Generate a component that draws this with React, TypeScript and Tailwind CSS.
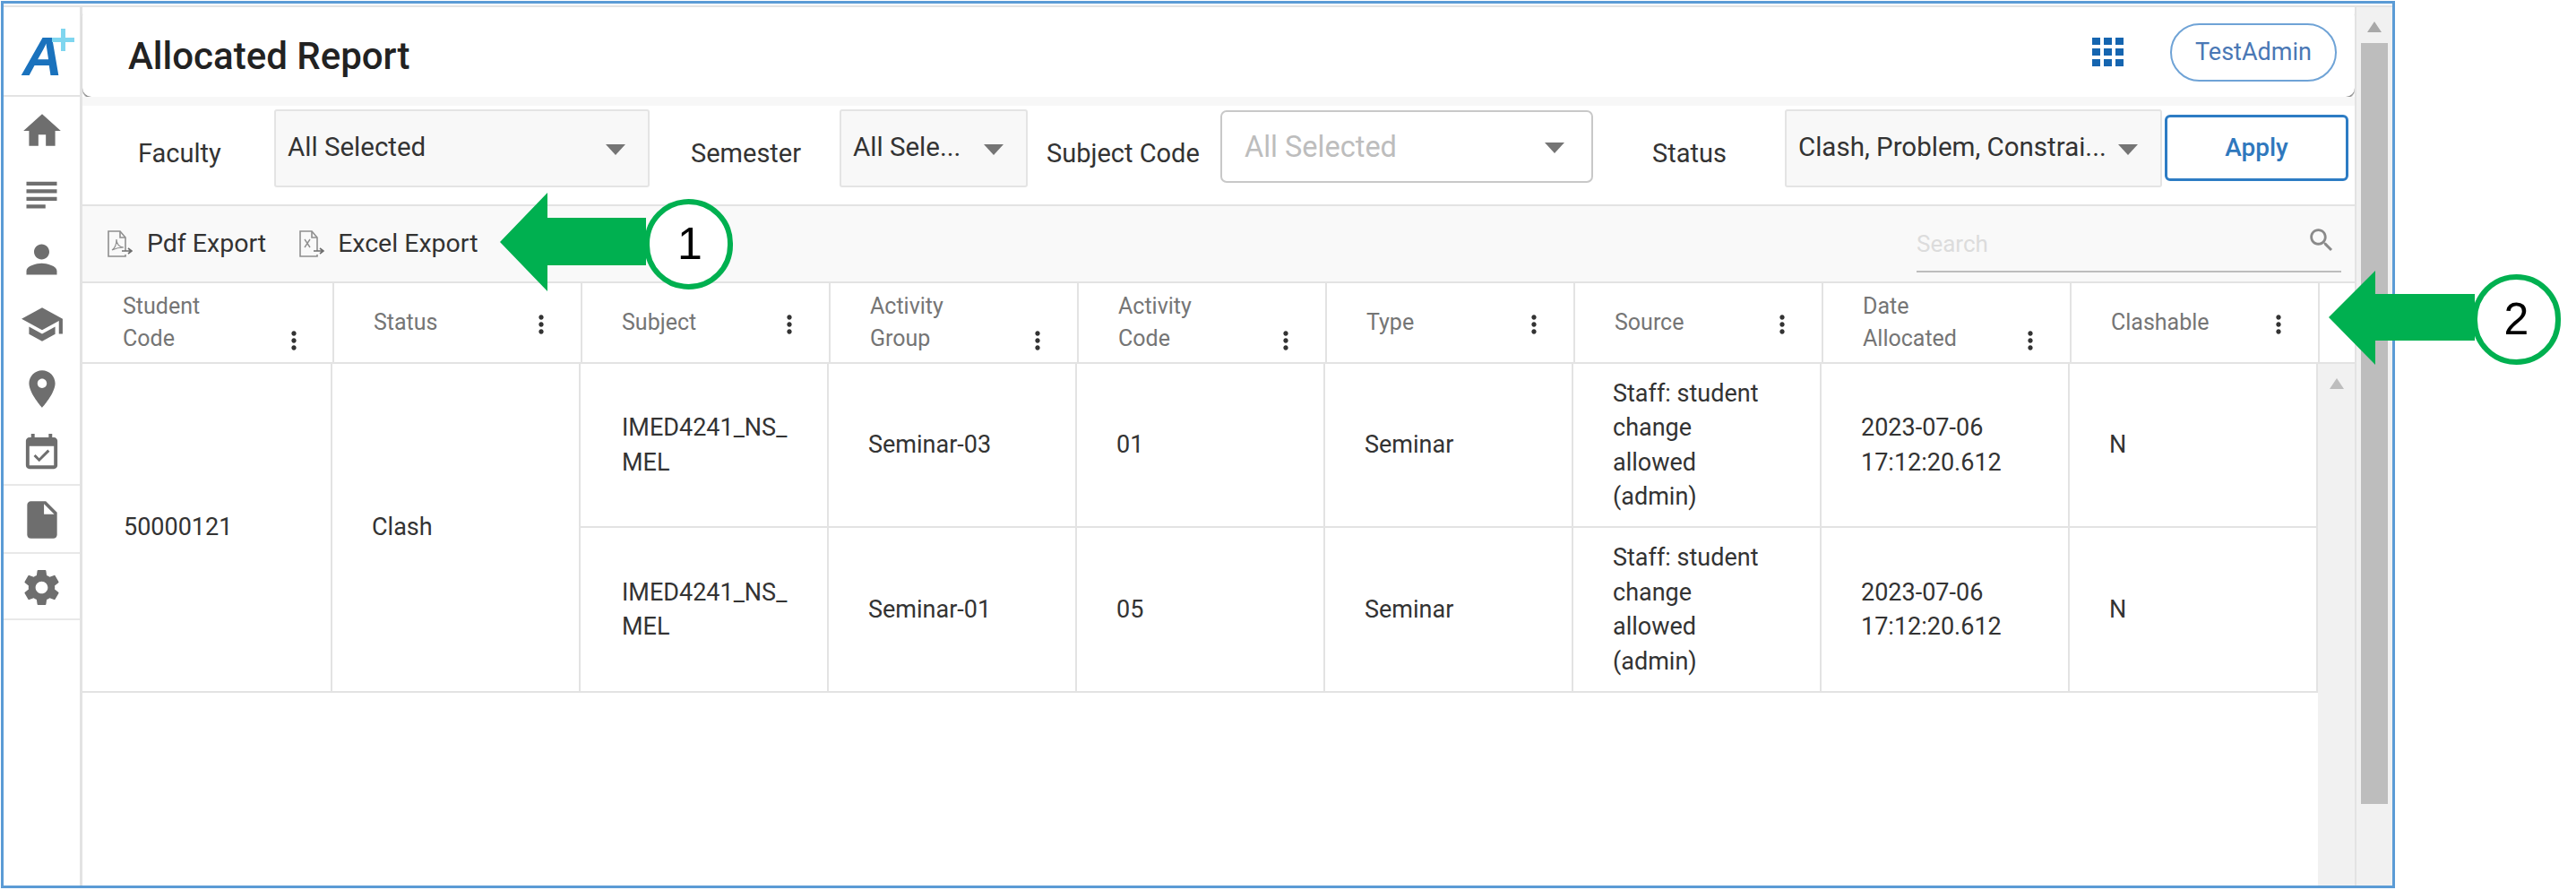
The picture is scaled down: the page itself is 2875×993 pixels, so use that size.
const kebab = "M12 8c1.1 0 2-.9 2-2s-.9-2-2-2-2 .9-2 2 .9 2 2 2zm0 2c-1.1 0-2 .9-2 2s.9 2 2 2 2-.9 2-2-.9-2-2-2zm0 6c-1.1 0-2 .9-2 2s.9 2 2 2 2-.9 2-2-.9-2-2-2z";

const MdIcon = ({ d, size }: { d: string; size: number }) => (
  <svg width={size} height={size} viewBox="0 0 24 24" fill="#6e6e6e">
    <path d={d} />
  </svg>
);

const Caret = ({ className }: { className?: string }) => (
  <svg width="22" height="12" viewBox="0 0 22 12" className={className}>
    <polygon points="0,0 22,0 11,12" fill="#757575" />
  </svg>
);

const navTop = [
  { d: "M10 20v-6h4v6h5v-8h3L12 3 2 12h3v8z", size: 50 },
  { d: "M14 17H4v2h10v-2zm6-8H4v2h16V9zM4 15h16v-2H4v2zM4 5v2h16V5H4z", size: 51 },
  { d: "M12 12c2.21 0 4-1.79 4-4s-1.79-4-4-4-4 1.79-4 4 1.79 4 4 4zm0 2c-2.67 0-8 1.34-8 4v2h16v-2c0-2.66-5.33-4-8-4z", size: 51 },
  { d: "M5 13.18v4L12 21l7-3.82v-4L12 17l-7-3.82zM12 3L1 9l11 6 9-4.91V17h2V9L12 3z", size: 50 },
  { d: "M12 2C8.13 2 5 5.13 5 9c0 5.25 7 13 7 13s7-7.75 7-13c0-3.87-3.13-7-7-7zm0 9.5c-1.38 0-2.5-1.12-2.5-2.5s1.12-2.5 2.5-2.5 2.5 1.12 2.5 2.5-1.12 2.5-2.5 2.5z", size: 50 },
  { d: "M16.53 11.06L15.47 10l-4.88 4.88-2.12-2.12-1.06 1.06L10.59 17l5.94-5.94zM19 3h-1V1h-2v2H8V1H6v2H5c-1.11 0-1.99.9-1.99 2L3 19c0 1.1.89 2 2 2h14c1.1 0 2-.9 2-2V5c0-1.1-.9-2-2-2zm0 16H5V8h14v11z", size: 47 },
];
const fileIcon = "M6 2c-1.1 0-1.99.9-1.99 2L4 20c0 1.1.89 2 1.99 2H18c1.1 0 2-.9 2-2V8l-6-6H6zm7 7V3.5L18.5 9H13z";
const gearIcon = "M19.43 12.98c.04-.32.07-.64.07-.98s-.03-.66-.07-.98l2.11-1.65c.19-.15.24-.42.12-.64l-2-3.46c-.12-.22-.39-.3-.61-.22l-2.49 1c-.52-.4-1.08-.73-1.69-.98l-.38-2.65C14.46 2.18 14.25 2 14 2h-4c-.25 0-.46.18-.49.42l-.38 2.65c-.61.25-1.17.59-1.69.98l-2.49-1c-.23-.09-.49 0-.61.22l-2 3.46c-.13.22-.07.49.12.64l2.11 1.65c-.04.32-.07.65-.07.98s.03.66.07.98l-2.11 1.65c-.19.15-.24.42-.12.64l2 3.46c.12.22.39.3.61.22l2.49-1c.52.4 1.08.73 1.69.98l.38 2.65c.03.24.24.42.49.42h4c.25 0 .46-.18.49-.42l.38-2.65c.61-.25 1.17-.59 1.69-.98l2.49 1c.23.09.49 0 .61-.22l2-3.46c.12-.22.07-.49-.12-.64l-2.11-1.65zM12 15.5c-1.93 0-3.5-1.57-3.5-3.5s1.57-3.5 3.5-3.5 3.5 1.57 3.5 3.5-1.57 3.5-3.5 3.5z";

const Sidebar = () => (
  <div className="flex w-[88px] shrink-0 flex-col border-r-[3px] border-[#e3e3e3]">
    <div className="relative h-[100px] shrink-0 border-b-2 border-[#e3e3e3]">
      <span className="absolute left-[21px] top-[19px] font-['Liberation_Sans',sans-serif] text-[62px] font-bold italic leading-[72px] text-[#1a72bd]">
        A
      </span>
      <svg width="25" height="25" viewBox="0 0 25 25" className="absolute left-[54px] top-[24px]">
        <rect x="10" y="0" width="5" height="25" fill="#7fd6ef" />
        <rect x="0" y="10" width="25" height="5" fill="#7fd6ef" />
      </svg>
    </div>
    <div className="flex flex-col border-b-2 border-[#e8e8e8]">
      {navTop.map((n) => (
        <div key={n.d} className="flex h-[72px] items-center justify-center pt-[3px]">
          <MdIcon d={n.d} size={n.size} />
        </div>
      ))}
    </div>
    <div className="flex h-[76px] items-center justify-center border-b-2 border-[#e8e8e8] pt-[2px]">
      <MdIcon d={fileIcon} size={50} />
    </div>
    <div className="flex h-[74px] items-center justify-center border-b-2 border-[#e8e8e8] pt-[2px]">
      <MdIcon d={gearIcon} size={47} />
    </div>
  </div>
);

const TopBar = () => (
  <div className="flex h-[100px] shrink-0 items-center justify-between rounded-[10px] bg-white pl-[51px] pr-[20px] shadow-[0_2px_1px_#8a8a8a]">
    <h1 className="mt-[10px] text-[42px] font-medium leading-[50px] text-[#222]">Allocated Report</h1>
    <div className="flex items-center gap-[52px]">
      <div className="grid grid-cols-3 gap-[4px]">
        {[1, 2, 3, 4, 5, 6, 7, 8, 9].map((i) => (
          <div key={i} className="h-[8px] w-[9px] bg-[#1565b0]" />
        ))}
      </div>
      <div className="flex h-[65px] w-[186px] items-center justify-center rounded-full border-2 border-[#6fa3d6] text-[27px] text-[#4a78b5]">
        TestAdmin
      </div>
    </div>
  </div>
);

const Label = ({ text, className }: { text: string; className: string }) => (
  <span className={`mt-[33px] whitespace-nowrap text-[29px] leading-[32px] text-[#333] ${className}`}>{text}</span>
);

const FilledSelect = ({ text, className }: { text: string; className: string }) => (
  <div className={`relative h-[87px] rounded-[3px] border-2 border-[#e4e4e4] bg-[#f8f8f8] pl-[13px] pt-[24px] ${className}`}>
    <span className="block whitespace-nowrap text-[29.5px] leading-[32px] text-[#333]">{text}</span>
    <Caret className="absolute right-[25px] top-[37px]" />
  </div>
);

const Filters = () => (
  <div className="flex h-[110px] shrink-0 items-start bg-white pt-[4px]">
    <Label text="Faculty" className="ml-[62px] w-[93px]" />
    <FilledSelect text="All Selected" className="ml-[59px] w-[419px]" />
    <Label text="Semester" className="ml-[46px] w-[126px]" />
    <FilledSelect text="All Sele..." className="ml-[40px] w-[210px]" />
    <Label text="Subject Code" className="ml-[21px] w-[173px]" />
    <div className="relative ml-[21px] mt-px h-[81px] w-[416px] rounded-[7px] border-2 border-[#c8c8c8] bg-white pl-[25px] pt-[22px]">
      <span className="block whitespace-nowrap text-[32.5px] leading-[34px] text-[#bdbdbd]">All Selected</span>
      <Caret className="absolute right-[30px] top-[34px]" />
    </div>
    <Label text="Status" className="ml-[66px] w-[94px]" />
    <FilledSelect text="Clash, Problem, Constrai..." className="ml-[54px] w-[421px]" />
    <div className="ml-[3px] mt-[6px] flex h-[74px] w-[205px] items-center justify-center rounded-[6px] border-[3px] border-[#2d7cc4] text-[28px] font-medium text-[#2f78bd]">
      Apply
    </div>
  </div>
);

const PdfIcon = () => (
  <svg width="28" height="30" viewBox="0 0 28 30" fill="none" stroke="#8f8f8f" strokeWidth="1.6">
    <path d="M20 23V8l-6-7H1v28h19v-2" />
    <path d="M14 1v7h6" />
    <path d="M5 22c3-2 5-7 5-12 0 5 3 9 8 9-5 0-9 1-13 3z" strokeWidth="1.2" />
    <path d="M16 23h11M23 20l4 3-4 3" stroke="#6e6e6e" />
  </svg>
);

const ExcelIcon = () => (
  <svg width="28" height="30" viewBox="0 0 28 30" fill="none" stroke="#8f8f8f" strokeWidth="1.6">
    <path d="M20 23V8l-6-7H1v28h19v-2" />
    <path d="M14 1v7h6" />
    <path d="M6 10l6 9M12 10l-6 9" strokeWidth="1.4" />
    <path d="M16 23h11M23 20l4 3-4 3" stroke="#6e6e6e" />
  </svg>
);

const Toolbar = () => (
  <div className="flex h-[88px] shrink-0 items-center border-y-2 border-[#e3e3e3] bg-[#f9f9f9] pl-[28px] pr-[15px]">
    <PdfIcon />
    <span className="ml-[16px] whitespace-nowrap text-[28.5px] text-[#333]">Pdf Export</span>
    <div className="ml-[37px]">
      <ExcelIcon />
    </div>
    <span className="ml-[15px] whitespace-nowrap text-[28.5px] text-[#333]">Excel Export</span>
    <div className="mb-[10px] ml-auto flex h-[56px] w-[474px] items-start justify-between self-end border-b-2 border-[#bdbdbd]">
      <span className="mt-[8px] text-[26px] leading-[32px] text-[#dcdcdc]">Search</span>
      <svg width="34" height="34" viewBox="0 0 24 24" fill="#8a8a8a" className="mr-[5px] mt-[3px]">
        <path d="M15.5 14h-.79l-.28-.27C15.41 12.59 16 11.11 16 9.5 16 5.91 13.09 3 9.5 3S3 5.91 3 9.5 5.91 16 9.5 16c1.61 0 3.09-.59 4.23-1.57l.27.28v.79l5 4.99L20.49 19l-4.99-5zm-6 0C7.01 14 5 11.99 5 9.5S7.01 5 9.5 5 14 7.01 14 9.5 11.99 14 9.5 14z" />
      </svg>
    </div>
  </div>
);

const headers = [
  ["Student", "Code"],
  ["Status"],
  ["Subject"],
  ["Activity", "Group"],
  ["Activity", "Code"],
  ["Type"],
  ["Source"],
  ["Date", "Allocated"],
  ["Clashable"],
];

const HeaderRow = () => (
  <div className="grid h-[90px] shrink-0 grid-cols-[281px_repeat(8,277px)] border-b-2 border-[#e3e3e3] bg-white">
    {headers.map((lines, i) => (
      <div key={lines.join()} className="flex items-center border-r-2 border-[#e3e3e3] pl-[44px] first:pl-[45px]">
        <div className="flex items-end">
          <div className={`${i === 0 ? "w-[175px]" : "w-[171px]"} text-[25px] leading-[36px] text-[#757575]`}>
            {lines.map((l) => (
              <div key={l}>{l}</div>
            ))}
          </div>
          <svg width="32" height="32" viewBox="0 0 24 24" fill="#333">
            <path d={kebab} />
          </svg>
        </div>
      </div>
    ))}
  </div>
);

const cell = "flex items-center border-b-2 border-r-2 border-[#e3e3e3] pl-[44px] text-[27px] leading-[38.5px] text-[#333] first:pl-[46px]";

const rows = [
  { group: "Seminar-03", code: "01" },
  { group: "Seminar-01", code: "05" },
];

const TableBody = () => (
  <div className="flex min-h-0 flex-1">
    <div className="grid h-[367px] grid-cols-[279px_repeat(8,277px)] grid-rows-[183px_184px] bg-white">
      <div className={`${cell} row-span-2`}>50000121</div>
      <div className={`${cell} row-span-2`}>Clash</div>
      {rows.map((r) => (
        <div key={r.code} className="contents">
          <div className={cell}>
            <div>
              IMED4241_NS_
              <br />
              MEL
            </div>
          </div>
          <div className={cell}>{r.group}</div>
          <div className={cell}>{r.code}</div>
          <div className={cell}>Seminar</div>
          <div className={cell}>
            <div>
              Staff: student
              <br />
              change
              <br />
              allowed
              <br />
              (admin)
            </div>
          </div>
          <div className={cell}>
            <div>
              2023-07-06
              <br />
              17:12:20.612
            </div>
          </div>
          <div className={cell}>N</div>
        </div>
      ))}
    </div>
    <div className="flex flex-1 justify-center bg-[#f1f1f1] pt-[16px]">
      <svg width="16" height="12" viewBox="0 0 16 12">
        <polygon points="8,0 16,12 0,12" fill="#bdbdbd" />
      </svg>
    </div>
  </div>
);

const PageScrollbar = () => (
  <div className="flex w-[42px] shrink-0 flex-col items-center border-l-2 border-[#e3e3e3] bg-[#f1f1f1]">
    <svg width="16" height="12" viewBox="0 0 16 12" className="mt-[16px]">
      <polygon points="8,0 16,12 0,12" fill="#a8a8a8" />
    </svg>
    <div className="mt-[12px] h-[849px] w-[30px] bg-[#bdbdbd]" />
  </div>
);

const Callout = ({ n, className }: { n: string; className: string }) => (
  <div className={`absolute flex h-[101px] w-[99px] items-center justify-center rounded-full border-[6px] border-[#00b050] bg-white font-['Liberation_Sans',sans-serif] text-[50px] text-black ${className}`}>
    {n}
  </div>
);

export default function App() {
  return (
    <div className="relative h-[993px] w-[2875px] overflow-hidden bg-white pl-px pt-px font-['Roboto',sans-serif]">
      <div className="h-[990px] w-[2672px] border-[3px] border-[#5b9bd5] pt-[2px]">
        <div className="flex h-[982px] border-t-2 border-[#e3e3e3]">
          <Sidebar />
          <div className="flex min-w-0 flex-1 flex-col bg-white">
            <TopBar />
            <div className="h-[10px] shrink-0 bg-[#f7f7f7]" />
            <Filters />
            <Toolbar />
            <HeaderRow />
            <TableBody />
          </div>
          <PageScrollbar />
        </div>
      </div>

      <svg width="165" height="110" viewBox="0 0 165 110" className="absolute left-[558px] top-[215px]">
        <polygon points="0,55 53,0 53,28 163,28 163,81 53,81 53,110" fill="#00b050" />
      </svg>
      <Callout n="1" className="left-[719px] top-[222px] pl-[3px]" />
      <svg width="165" height="105" viewBox="0 0 165 105" className="absolute left-[2599px] top-[302px]">
        <polygon points="0,52 52,0 52,26 163,26 163,78 52,78 52,105" fill="#00b050" />
      </svg>
      <Callout n="2" className="left-[2759px] top-[306px]" />
    </div>
  );
}
